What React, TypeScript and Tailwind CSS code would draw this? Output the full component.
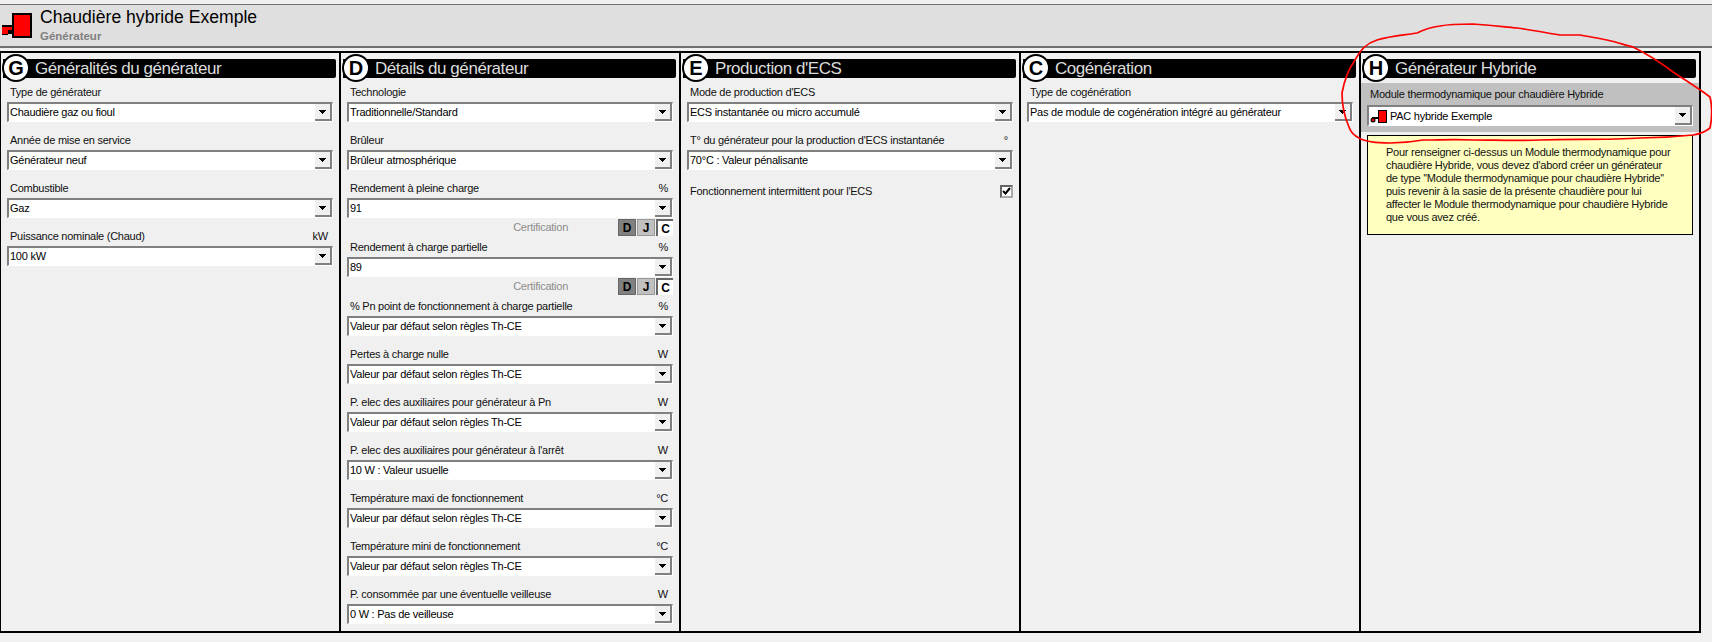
import { ReactNode } from 'react';

const SANS = "font-['Liberation_Sans',Arial,sans-serif]";
const BODY = 'text-[11px] tracking-[-0.25px]';

function BoilerIcon() {
  return (
    <svg width="32" height="25" viewBox="0 0 32 25" shapeRendering="crispEdges" className="shrink-0">
      <rect x="12" y="0" width="20" height="25" fill="#000" />
      <rect x="14" y="2" width="16" height="21" fill="#f00" />
      <rect x="2" y="12" width="10" height="2" fill="#000" />
      <rect x="2" y="14" width="10" height="3" fill="#f00" />
      <rect x="8" y="17" width="4" height="4" fill="#000" />
      <rect x="2" y="17" width="6" height="4" fill="#f00" />
      <rect x="2" y="21" width="6" height="1" fill="#000" />
    </svg>
  );
}

function SmallBoilerIcon() {
  return (
    <svg width="17" height="13" viewBox="0 0 17 13" className="shrink-0">
      <rect x="8" y="0" width="9" height="13" fill="#000" />
      <rect x="9" y="1" width="7" height="11" fill="#f00" />
      <rect x="2" y="7" width="7" height="2" fill="#000" />
      <circle cx="3" cy="10" r="2.5" fill="#000" />
      <circle cx="3" cy="10" r="1.3" fill="#f00" />
    </svg>
  );
}

function Select({ value, icon, tall }: { value: string; icon?: boolean; tall?: boolean }) {
  return (
    <div className={`flex ${tall ? 'h-[21px]' : 'h-[20px]'} border-t-2 border-l-2 border-t-[#808080] border-l-[#808080] border-b border-r border-b-white border-r-white bg-white`}>
      <div className={`flex flex-1 items-center gap-[3px] overflow-hidden ${tall ? 'pt-[1px]' : 'pb-[1px]'} pl-[1px] ${BODY} leading-none text-black whitespace-nowrap`}>
        {icon && <SmallBoilerIcon />}
        {value}
      </div>
      <div className="flex w-[17px] shrink-0 items-center justify-center border-r-2 border-b-2 border-r-[#808080] border-b-[#808080] bg-[#f0f0f0]">
        <svg width="7" height="4" viewBox="0 0 7 4" shapeRendering="crispEdges">
          <path d="M0 0h7v1h-1v1h-1v1h-1v1h-1v-1h-1v-1h-1v-1h-1z" fill="#000" />
        </svg>
      </div>
    </div>
  );
}

function Field({ label, unit, value, first, cert }: { label: string; unit?: string; value: string; first?: boolean; cert?: boolean }) {
  return (
    <div className={first ? '' : 'mt-[8px]'}>
      <div className={`flex h-[20px] items-center justify-between pl-[3px] pr-[5px] pt-[1px] ${BODY} text-[#111]`}>
        <span>{label}</span>
        {unit && <span>{unit}</span>}
      </div>
      <Select value={value} />
      {cert && <Certification />}
    </div>
  );
}

function Certification() {
  return (
    <div className={`-mb-[8px] flex h-[19px] items-center justify-end ${BODY}`}>
      <span className="mr-[50px] text-[#8c8c8c]">Certification</span>
      <div className="flex h-[17px] text-[12px] font-bold leading-none tracking-normal text-black">
        <span className="flex w-[18px] items-center justify-center border border-[#666] bg-[#808080]">D</span>
        <span className="ml-[1px] flex w-[18px] items-center justify-center border border-[#999] bg-[#c0c0c0]">J</span>
        <span className="ml-[1px] flex w-[17px] items-center justify-center border-l-2 border-t-2 border-[#666] bg-white">C</span>
      </div>
    </div>
  );
}

function Panel({ letter, title, children, last }: { letter: string; title: string; children?: ReactNode; last?: boolean }) {
  return (
    <div className={last ? 'min-w-0 flex-1' : 'w-[340px] shrink-0 border-r-2 border-black'}>
      <div className="relative ml-[2px] mr-[3px] mt-[6px] flex h-[19px] items-center rounded-r-[2px] bg-black pl-[32px] text-[17px] leading-none tracking-[-0.45px] text-[#dcdcdc]">
        <span className="absolute -left-[1px] -top-[5px] flex h-[28px] w-[28px] items-center justify-center rounded-full border-[2px] border-black bg-white text-[20px] font-bold tracking-normal text-black">
          {letter}
        </span>
        {title}
      </div>
      {children}
    </div>
  );
}

export default function App() {
  return (
    <div className={`relative h-[642px] w-[1712px] overflow-hidden bg-[#f0f0f0] pt-[4px] ${SANS}`}>
      {/* title band */}
      <div className="flex h-[44px] items-start border-t border-b-2 border-t-[#707070] border-b-[#707070] bg-[#dfdfdf]">
        <div className="mt-[8px]">
          <BoilerIcon />
        </div>
        <div className="ml-[8px]">
          <div className="mt-[2px] text-[17.6px] leading-[20px] text-black">Chaudière hybride Exemple</div>
          <div className="text-[11.5px] font-bold leading-[18px] text-[#808080]">Générateur</div>
        </div>
      </div>

      {/* generator panels */}
      <div className="-ml-[1px] mt-[3px] flex h-[582px] w-[1702px] border-2 border-black">
        <Panel letter="G" title="Généralités du générateur">
          <div className="mt-[4px] px-[6px]">
            <Field first label="Type de générateur" value="Chaudière gaz ou fioul" />
            <Field label="Année de mise en service" value="Générateur neuf" />
            <Field label="Combustible" value="Gaz" />
            <Field label="Puissance nominale (Chaud)" unit="kW" value="100 kW" />
          </div>
        </Panel>

        <Panel letter="D" title="Détails du générateur">
          <div className="mt-[4px] px-[6px]">
            <Field first label="Technologie" value="Traditionnelle/Standard" />
            <Field label="Brûleur" value="Brûleur atmosphérique" />
            <Field cert label="Rendement à pleine charge" unit="%" value="91" />
            <Field cert label="Rendement à charge partielle" unit="%" value="89" />
            <Field label="% Pn point de fonctionnement à charge partielle" unit="%" value="Valeur par défaut selon règles Th-CE" />
            <Field label="Pertes à charge nulle" unit="W" value="Valeur par défaut selon règles Th-CE" />
            <Field label="P. elec des auxiliaires pour générateur à Pn" unit="W" value="Valeur par défaut selon règles Th-CE" />
            <Field label="P. elec des auxiliaires pour générateur à l'arrêt" unit="W" value="10 W : Valeur usuelle" />
            <Field label="Température maxi de fonctionnement" unit="°C" value="Valeur par défaut selon règles Th-CE" />
            <Field label="Température mini de fonctionnement" unit="°C" value="Valeur par défaut selon règles Th-CE" />
            <Field label="P. consommée par une éventuelle veilleuse" unit="W" value="0 W : Pas de veilleuse" />
          </div>
        </Panel>

        <Panel letter="E" title="Production d'ECS">
          <div className="mt-[4px] px-[6px]">
            <Field first label="Mode de production d'ECS" value="ECS instantanée ou micro accumulé" />
            <Field label="T° du générateur pour la production d'ECS instantanée" unit="°" value="70°C : Valeur pénalisante" />
            <div className={`mt-[11px] flex h-[20px] items-center justify-between pl-[3px] ${BODY} text-[#111]`}>
              <span>Fonctionnement intermittent pour l'ECS</span>
              <span className="flex h-[13px] w-[13px] items-center justify-center border-2 border-t-[#666] border-l-[#666] border-b-[#aaa] border-r-[#aaa] bg-white">
                <svg width="9" height="8" viewBox="0 0 9 8">
                  <path d="M1 4l2.5 2.5L8 1" fill="none" stroke="#000" strokeWidth="2" />
                </svg>
              </span>
            </div>
          </div>
        </Panel>

        <Panel letter="C" title="Cogénération">
          <div className="mt-[4px] px-[6px]">
            <Field first label="Type de cogénération" value="Pas de module de cogénération intégré au générateur" />
          </div>
        </Panel>

        <Panel last letter="H" title="Générateur Hybride">
          <div className="mt-[5px] h-[49px] bg-[#c0c0c0] px-[6px]">
            <div className={`flex h-[22px] items-center pl-[3px] ${BODY} text-[#111]`}>Module thermodynamique pour chaudière Hybride</div>
            <Select tall icon value="PAC hybride Exemple" />
          </div>
          <div className={`mx-[6px] mt-[3px] h-[100px] border border-black bg-[#ffffc0] pl-[18px] pt-[10px] ${BODY} leading-[13px] text-[#111] whitespace-nowrap`}>
            Pour renseigner ci-dessus un Module thermodynamique pour
            <br />
            chaudière Hybride, vous devez d'abord créer un générateur
            <br />
            de type ''Module thermodynamique pour chaudière Hybride''
            <br />
            puis revenir à la sasie de la présente chaudière pour lui
            <br />
            affecter le Module thermodynamique pour chaudière Hybride
            <br />
            que vous avez créé.
          </div>
        </Panel>
      </div>

      {/* hand-drawn annotation */}
      <svg className="absolute left-0 top-0" width="1712" height="642" fill="none">
        <path
          d="M1355 60C1360 50 1367 43 1377 40C1390 36 1405 35 1417 33C1425 29 1432 27 1440 26C1450 24 1462 24 1473 24C1490 25 1505 27 1517 28C1532 30 1547 33 1560 35C1567 35 1573 35 1580 35C1590 37 1598 38 1607 40C1616 42 1625 45 1633 47C1645 53 1660 62 1673 72C1685 80 1698 88 1710 97C1712 105 1712 118 1710 128C1705 132 1700 134 1693 135C1675 137 1660 138 1640 138C1610 140 1575 139 1540 140C1515 141 1495 140 1473 140C1455 139 1440 140 1423 140C1412 142 1400 143 1390 143C1378 143 1366 142 1359 138C1353 135 1350 130 1349 127C1345 118 1342 108 1342 93C1344 82 1348 70 1355 60Z"
          stroke="#f00"
          strokeWidth="1.7"
        />
      </svg>
    </div>
  );
}
